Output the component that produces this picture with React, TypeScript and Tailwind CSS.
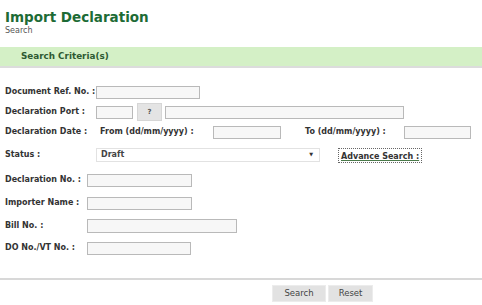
import React from "react";

const inputCls = "h-[13px] border border-[#b9b9b9] bg-[#f7f7f7] shrink-0";
const labelCls = "font-bold text-[8px] text-[#333]";

export default function App() {
  return (
    <div className="w-[482px] h-[305px] bg-white overflow-hidden" style={{ fontFamily: '"DejaVu Sans", Verdana, sans-serif' }}>
      <div className="pl-[5px] pt-[9px] h-[47px]">
        <div className="text-[13.5px] font-bold text-[#1d6b35] leading-[17px]">Import Declaration</div>
        <div className="text-[8px] text-[#555] leading-[9px] mt-[0px]">Search</div>
      </div>
      <div className="h-[21px] bg-[#d4f0c6] border-b-2 border-[#dcdcdc] flex items-center pl-[21px]">
        <span className="font-bold text-[8.8px] text-[#2e5a32]">Search Criteria(s)</span>
      </div>

      <div className="pl-[5px] pt-[15px]">
        {/* Row 1 */}
        <div className="h-[18px] flex items-center">
          <div className={`${labelCls} w-[91px] whitespace-nowrap`}>Document Ref. No. :</div>
          <div className={`${inputCls} w-[104px]`} />
        </div>
        {/* Row 2 */}
        <div className="h-[18px] mt-[2px] flex items-center">
          <div className={`${labelCls} w-[91px]`}>Declaration Port :</div>
          <div className={`${inputCls} w-[37px]`} />
          <div className="ml-[4px] w-[25px] h-[18px] bg-[#e4e4e4] border border-[#d6d6d6] flex items-center justify-center text-[7px] font-bold text-[#555]">?</div>
          <div className={`${inputCls} ml-[3px] w-[239px]`} />
        </div>
        {/* Row 3 */}
        <div className="h-[18px] mt-[2px] flex items-center">
          <div className={`${labelCls} w-[95px]`}>Declaration Date :</div>
          <div className={`${labelCls} w-[113px] whitespace-nowrap`}>From (dd/mm/yyyy) :</div>
          <div className={`${inputCls} w-[68px]`} />
          <div className={`${labelCls} ml-[24px] w-[99px] whitespace-nowrap`}>To (dd/mm/yyyy) :</div>
          <div className={`${inputCls} w-[67px]`} />
        </div>
        {/* Row 4 */}
        <div className="h-[18px] mt-[5px] flex items-center">
          <div className={`${labelCls} w-[91px]`}>Status :</div>
          <div className="h-[14px] w-[224px] border border-[#e2e2e2] bg-white flex items-center justify-between pl-[4px] pr-[6px]">
            <span className="text-[8px] font-bold text-[#444]">Draft</span>
            <span className="text-[5px] text-[#333]">▼</span>
          </div>
          <div className="ml-[19px] px-[2px] outline-1 outline-dotted outline-[#666] leading-[10px]">
            <span className="font-bold text-[8px] text-[#333] underline decoration-[#4a7a4a]">Advance Search :</span>
          </div>
        </div>
        {/* Row 5 */}
        <div className="h-[18px] mt-[7px] flex items-center">
          <div className={`${labelCls} w-[82px]`}>Declaration No. :</div>
          <div className={`${inputCls} w-[105px]`} />
        </div>
        {/* Row 6 */}
        <div className="h-[18px] mt-[5px] flex items-center">
          <div className={`${labelCls} w-[82px]`}>Importer Name :</div>
          <div className={`${inputCls} w-[105px]`} />
        </div>
        {/* Row 7 */}
        <div className="h-[18px] mt-[5px] flex items-center">
          <div className={`${labelCls} w-[82px]`}>Bill No. :</div>
          <div className={`${inputCls} h-[14px] w-[150px]`} />
        </div>
        {/* Row 8 */}
        <div className="h-[18px] mt-[4px] flex items-center">
          <div className={`${labelCls} w-[82px]`}>DO No./VT No. :</div>
          <div className={`${inputCls} w-[104px]`} />
        </div>
      </div>

      <div className="mt-[21px] border-t-2 border-[#d8d8d8]" />
      <div className="mt-[5px] flex gap-[2px] pl-[272px]">
        <div className="w-[54px] h-[17px] bg-[#e2e2e2] border border-[#ececec] flex items-center justify-center text-[8.5px] text-[#444]">Search</div>
        <div className="w-[45px] h-[17px] bg-[#e2e2e2] border border-[#ececec] flex items-center justify-center text-[8.5px] text-[#444]">Reset</div>
      </div>
    </div>
  );
}
